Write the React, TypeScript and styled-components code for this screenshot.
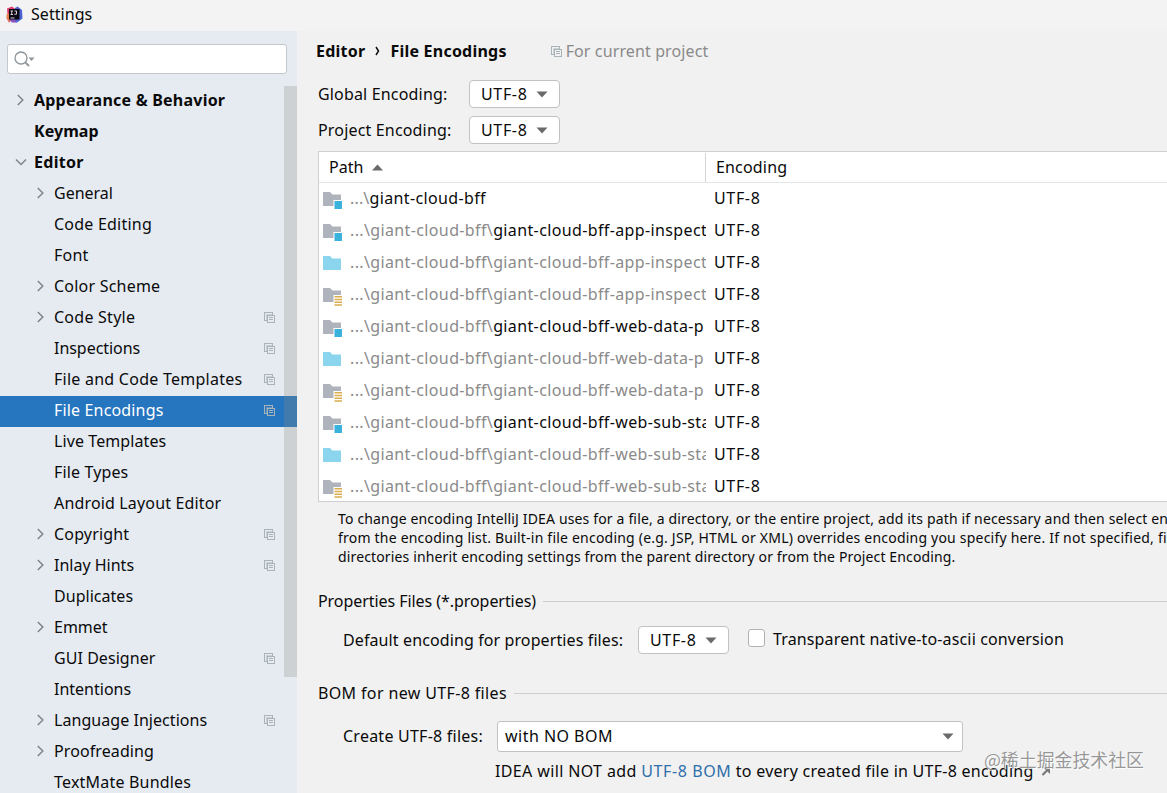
import React from 'react';
import styled, { createGlobalStyle } from 'styled-components';

const GlobalStyle = createGlobalStyle`
  * { box-sizing: border-box; }
  body {
    margin: 0;
    overflow: hidden;
    background: #f1f1f1;
    color: #0a0a0a;
    font-family: 'Noto Sans', 'Noto Sans CJK SC', sans-serif;
    font-size: 16px;
  }
`;

const Window = styled.div`
  position: relative;
  display: flex;
  flex-direction: column;
  width: 1167px;
  height: 793px;
  overflow: hidden;
`;

const TitleBar = styled.header`
  display: flex;
  align-items: center;
  gap: 8px;
  flex: none;
  height: 31px;
  padding: 0 0 3px 6px;
  background: #f3f3f3;
`;

const Body = styled.div`
  display: flex;
  flex: 1;
  min-height: 0;
`;

const Text = styled.span<{ $track?: number; $bold?: boolean; $muted?: boolean }>`
  flex: none;
  white-space: pre;
  letter-spacing: ${(p) => p.$track ?? 0}px;
  font-weight: ${(p) => (p.$bold ? 700 : 400)};
  ${(p) => p.$muted && 'color: #8a8a8a;'}
`;

const Sidebar = styled.aside`
  position: relative;
  flex: none;
  width: 297px;
  padding-top: 13px;
  overflow: hidden;
  background: #e6ebf2;
`;

const SearchField = styled.div`
  display: flex;
  align-items: center;
  width: 280px;
  height: 30px;
  margin: 0 0 12px 7px;
  padding-left: 6px;
  border: 1px solid #c3c8cb;
  border-radius: 3px;
  background: #fff;
`;

const TreeRow = styled.div<{ $level: number; $selected?: boolean }>`
  display: flex;
  align-items: center;
  height: 31px;
  padding: 0 22px 4px ${(p) => (p.$level ? 34 : 14)}px;
  background: ${(p) => (p.$selected ? '#2675bf' : 'transparent')};
  color: ${(p) => (p.$selected ? '#fff' : '#0a0a0a')};
`;

const Twisty = styled.span`
  display: flex;
  align-items: center;
  flex: none;
  width: 20px;
  height: 100%;
`;

const RowEnd = styled.span`
  display: flex;
  margin: 2px 0 0 auto;
`;

const Scrollbar = styled.div`
  position: absolute;
  top: 55px;
  right: 0;
  width: 13px;
  height: 591px;
  background: rgba(140, 140, 130, 0.27);
`;

const Main = styled.main`
  flex: 1;
  min-width: 0;
  padding-left: 21px;
`;

const Heading = styled.div`
  display: flex;
  align-items: center;
  height: 41px;
  margin-left: -2px;
  padding-bottom: 1px;
`;

const Crumb = styled.span`
  display: flex;
  align-items: center;
  justify-content: center;
  width: 25px;
`;

const ProjectHint = styled.span`
  display: flex;
  align-items: center;
  gap: 4px;
  margin-left: 44px;
`;

const Field = styled.div`
  display: flex;
  align-items: center;
  height: 28px;
  margin-top: 8px;
`;

const FieldLabel = styled.span`
  width: 151px;
`;

const Combo = styled.div<{ $wide?: boolean }>`
  display: flex;
  align-items: center;
  justify-content: space-between;
  flex: none;
  width: ${(p) => (p.$wide ? 466 : 91)}px;
  height: ${(p) => (p.$wide ? 31 : 28)}px;
  padding: ${(p) => (p.$wide ? '0 8px 0 7px' : '0 11px')};
  border: 1px solid #c2c2c2;
  border-radius: ${(p) => (p.$wide ? 3 : 4)}px;
  background: #fff;
`;

const Table = styled.div`
  height: 351px;
  margin-top: 7px;
  border: 1px solid #cfcfcf;
  border-right: 0;
  overflow: hidden;
  background: #fff;
`;

const TableHead = styled.div`
  display: flex;
  align-items: center;
  height: 31px;
  border-bottom: 1px solid #e4e4e4;
`;

const HeadCell = styled.div<{ $first?: boolean }>`
  display: flex;
  align-items: center;
  gap: 9px;
  flex: ${(p) => (p.$first ? '0 0 387px' : '1')};
  height: 29px;
  padding-left: 10px;
  ${(p) => p.$first && 'border-right: 1px solid #d4d4d4;'}
`;

const TableRow = styled.div`
  display: flex;
  align-items: center;
  height: 32px;
  padding-bottom: 2px;
`;

const PathCell = styled.div`
  display: flex;
  align-items: center;
  flex: none;
  width: 387px;
  padding-left: 4px;
  overflow: hidden;
`;

const FolderBox = styled.span`
  display: flex;
  flex: none;
  width: 27px;
  padding-top: 4px;
`;

const EncodingCell = styled.div`
  padding-left: 8px;
`;

const Help = styled.div`
  display: flex;
  flex-direction: column;
  height: 57px;
  margin: 7px 0 0 20px;
  font-size: 14px;
  line-height: 19px;
`;

const SectionTitle = styled.div<{ $gap: number }>`
  display: flex;
  align-items: center;
  gap: 7px;
  height: 24px;
  margin-top: ${(p) => p.$gap}px;
  &::after {
    content: '';
    flex: 1;
    height: 1px;
    background: #cdcdcd;
  }
`;

const OptionRow = styled.div<{ $top: number }>`
  display: flex;
  align-items: center;
  margin: ${(p) => p.$top}px 0 0 25px;
`;

const OptionLabel = styled.span<{ $width: number; $lift?: number }>`
  width: ${(p) => p.$width}px;
  margin-bottom: ${(p) => p.$lift ?? 0}px;
`;

const ComboValue = styled.span`
  margin-bottom: 2px;
`;

const Checkbox = styled.span`
  width: 17px;
  height: 18px;
  margin: 0 8px 4px 19px;
  border: 1px solid #b3b3b3;
  border-radius: 3px;
  background: #fff;
`;

const CheckText = styled.span`
  margin-bottom: 2px;
`;

const Note = styled.div`
  display: flex;
  align-items: center;
  height: 24px;
  margin: 7px 0 0 177px;
`;

const Link = styled(Text)`
  color: #2f6fab;
`;

const LinkArrow = styled.span`
  display: flex;
  margin: 0 0 1px 7px;
`;

const Watermark = styled.div`
  position: absolute;
  right: 23px;
  top: 746px;
  font-family: 'Noto Sans CJK SC', sans-serif;
  font-size: 17.9px;
  line-height: 26px;
  white-space: nowrap;
  color: rgba(120, 120, 120, 0.75);
  text-shadow: 1px 1px 1px rgba(255, 255, 255, 0.9);
`;

const AppLogo = () => (
  <svg width="17" height="17" viewBox="0 0 17 17">
    <path d="M1 2.500 6 .5l4 3L8 12l-5 4.500L.5 12l1-3z" fill="#e0406f" />
    <path d="M.5 8.500 4 7v7l-1 2.500L.8 12z" fill="#e8804a" />
    <path d="M9 2 11.500.5l4.500 3.500.5 8.500-5.500 4-6-1z" fill="#4a63d0" />
    <path d="M3 13.500 8 13l3 3.500H6z" fill="#8a52c0" />
    <rect x="3" y="3" width="10.500" height="10.500" fill="#0b0710" />
    <path d="M4.500 5h2.500M5.750 5v3.500M4.500 8.500h2.500M8.500 5h2v3.200H8.300" fill="none" stroke="#d4d0d8" />
    <path d="M4.500 12h4" stroke="#d4d0d8" />
  </svg>
);

const SearchIcon = () => (
  <svg width="22" height="18" viewBox="0 0 22 18">
    <circle cx="7" cy="8" r="6" fill="none" stroke="#8d9499" strokeWidth="1.300" />
    <path d="m11.300 12.300 3.700 3.700" stroke="#8d9499" strokeWidth="1.800" />
    <path d="M14.500 7.500h6l-3 3.500z" fill="#8d9499" />
  </svg>
);

const Chevron = ({ open }: { open?: boolean }) => (
  <svg width="13" height="12" viewBox="0 0 13 12">
    <path
      d={open ? 'M2 3.500 7 8.500 12 3.500' : 'm3.800 1 5 5-5 5'}
      fill="none"
      stroke="#7f848a"
      strokeWidth="1.500"
    />
  </svg>
);

const ProjectIcon = () => (
  <svg width="11" height="11" viewBox="0 0 11 11" fill="none" stroke="#aab3b8" shapeRendering="crispEdges">
    <path d="M2.500 8.500H.5v-8h8v2" />
    <path d="M2.500 8.500v-6h6" strokeOpacity=".5" />
    <rect x="3.500" y="3.500" width="7" height="7" />
    <path d="M5 5.500h4M5 7.500h4" />
  </svg>
);

const DownArrow = () => (
  <svg width="12" height="7" viewBox="0 0 12 7">
    <path d="M.5.5h11L6 6.500z" fill="#6a6a6a" />
  </svg>
);

const SortArrow = () => (
  <svg width="11" height="7" viewBox="0 0 11 7">
    <path d="M0 6.500h11L5.500.5z" fill="#6a6a6a" />
  </svg>
);

type FolderKind = 'module' | 'source' | 'resource';

const Folder = ({ kind }: { kind: FolderKind }) => (
  <svg width="20" height="19" viewBox="0 0 20 19">
    <path d="M0 1h7l2.500 2.500H18v11.500H0z" fill={kind === 'source' ? '#8bd5ef' : '#afb4bc'} />
    {kind === 'module' && (
      <>
        <rect x="10.500" y="9" width="9.500" height="10" fill="#fff" />
        <rect x="11.500" y="10" width="7.500" height="8" fill="#3bb2dc" />
      </>
    )}
    {kind === 'resource' && (
      <>
        <rect x="10.500" y="8" width="9.500" height="11" fill="#fff" />
        <path d="M11.500 9.750H19M11.500 12.500H19M11.500 15.250H19M11.500 18H19" stroke="#d9ad4e" strokeWidth="1.600" />
      </>
    )}
  </svg>
);

interface TreeItem {
  label: string;
  track: number;
  level?: number;
  arrow?: 'open' | 'closed';
  project?: boolean;
  selected?: boolean;
}

const tree: TreeItem[] = [
  { label: 'Appearance & Behavior', track: 0.22, level: 0, arrow: 'closed' },
  { label: 'Keymap', track: 0.05, level: 0 },
  { label: 'Editor', track: 0.3, level: 0, arrow: 'open' },
  { label: 'General', track: 0, arrow: 'closed' },
  { label: 'Code Editing', track: 0.22 },
  { label: 'Font', track: 0.25 },
  { label: 'Color Scheme', track: 0.22, arrow: 'closed' },
  { label: 'Code Style', track: 0.25, arrow: 'closed', project: true },
  { label: 'Inspections', track: -0.04, project: true },
  { label: 'File and Code Templates', track: 0.25, project: true },
  { label: 'File Encodings', track: 0.16, project: true, selected: true },
  { label: 'Live Templates', track: 0.09 },
  { label: 'File Types', track: 0.14 },
  { label: 'Android Layout Editor', track: 0.16 },
  { label: 'Copyright', track: 0.17, arrow: 'closed', project: true },
  { label: 'Inlay Hints', track: 0, arrow: 'closed', project: true },
  { label: 'Duplicates', track: 0.03 },
  { label: 'Emmet', track: 0, arrow: 'closed' },
  { label: 'GUI Designer', track: 0.05, project: true },
  { label: 'Intentions', track: 0 },
  { label: 'Language Injections', track: 0.05, arrow: 'closed', project: true },
  { label: 'Proofreading', track: 0.1, arrow: 'closed' },
  { label: 'TextMate Bundles', track: 0.2 },
];

interface PathItem {
  kind: FolderKind;
  parent: string;
  name: string;
}

const kinds: FolderKind[] = ['module', 'source', 'resource'];
const modules = ['giant-cloud-bff-app-inspect', 'giant-cloud-bff-web-data-p', 'giant-cloud-bff-web-sub-sta'];

const paths: PathItem[] = [
  { kind: 'module', parent: '...\\', name: 'giant-cloud-bff' },
  ...modules.flatMap((name) => kinds.map((kind) => ({ kind, parent: '...\\giant-cloud-bff\\', name }))),
];

const EncodingCombo = () => (
  <Combo>
    <Text $track={0.65}>UTF-8</Text>
    <DownArrow />
  </Combo>
);

export default function App() {
  return (
    <Window>
      <GlobalStyle />
      <TitleBar>
        <AppLogo />
        <Text $track={0.05}>Settings</Text>
      </TitleBar>
      <Body>
        <Sidebar>
          <SearchField>
            <SearchIcon />
          </SearchField>
          {tree.map((item) => (
            <TreeRow key={item.label} $level={item.level ?? 1} $selected={item.selected}>
              <Twisty>{item.arrow && <Chevron open={item.arrow === 'open'} />}</Twisty>
              <Text $track={item.track} $bold={item.level === 0}>
                {item.label}
              </Text>
              {item.project && (
                <RowEnd>
                  <ProjectIcon />
                </RowEnd>
              )}
            </TreeRow>
          ))}
          <Scrollbar />
        </Sidebar>
        <Main>
          <Heading>
            <Text $bold $track={0.25}>Editor</Text>
            <Crumb>
              <svg width="5" height="10" viewBox="0 0 5 10">
                <path d="m1 1 2.500 4L1 9" fill="none" stroke="#111" strokeWidth="1.500" />
              </svg>
            </Crumb>
            <Text $bold $track={0.22}>File Encodings</Text>
            <ProjectHint>
              <ProjectIcon />
              <Text $muted $track={0.12}>For current project</Text>
            </ProjectHint>
          </Heading>
          <Field>
            <FieldLabel>
              <Text $track={0.17}>Global Encoding:</Text>
            </FieldLabel>
            <EncodingCombo />
          </Field>
          <Field>
            <FieldLabel>
              <Text $track={0.17}>Project Encoding:</Text>
            </FieldLabel>
            <EncodingCombo />
          </Field>
          <Table>
            <TableHead>
              <HeadCell $first>
                <Text>Path</Text>
                <SortArrow />
              </HeadCell>
              <HeadCell>
                <Text $track={0.17}>Encoding</Text>
              </HeadCell>
            </TableHead>
            {paths.map((item) => (
              <TableRow key={item.kind + item.name}>
                <PathCell>
                  <FolderBox>
                    <Folder kind={item.kind} />
                  </FolderBox>
                  <Text $muted $track={item.parent.length > 4 ? 0.37 : 0.15}>{item.parent}</Text>
                  <Text $muted={item.kind !== 'module'} $track={0.37}>{item.name}</Text>
                </PathCell>
                <EncodingCell>
                  <Text $track={0.65}>UTF-8</Text>
                </EncodingCell>
              </TableRow>
            ))}
          </Table>
          <Help>
            <Text $track={0.155}>
              To change encoding IntelliJ IDEA uses for a file, a directory, or the entire project, add its path if necessary and then select encoding
            </Text>
            <Text $track={0.21}>
              from the encoding list. Built-in file encoding (e.g. JSP, HTML or XML) overrides encoding you specify here. If not specified, files and
            </Text>
            <Text $track={0.14}>
              directories inherit encoding settings from the parent directory or from the Project Encoding.
            </Text>
          </Help>
          <SectionTitle $gap={23}>
            <Text $track={-0.06}>Properties Files (*.properties)</Text>
          </SectionTitle>
          <OptionRow $top={13}>
            <OptionLabel $width={295}>
              <Text $track={0.11}>Default encoding for properties files:</Text>
            </OptionLabel>
            <EncodingCombo />
            <Checkbox />
            <CheckText>
              <Text $track={0.14}>Transparent native-to-ascii conversion</Text>
            </CheckText>
          </OptionRow>
          <SectionTitle $gap={27}>
            <Text $track={0.36}>BOM for new UTF-8 files</Text>
          </SectionTitle>
          <OptionRow $top={16}>
            <OptionLabel $width={154} $lift={2}>
              <Text $track={0.24}>Create UTF-8 files:</Text>
            </OptionLabel>
            <Combo $wide>
              <ComboValue>
                <Text $track={0.47}>with NO BOM</Text>
              </ComboValue>
              <DownArrow />
            </Combo>
          </OptionRow>
          <Note>
            <Text $track={0.37}>IDEA will NOT add </Text>
            <Link $track={0.6}>UTF-8 BOM</Link>
            <Text $track={0.26}> to every created file in UTF-8 encoding</Text>
            <LinkArrow>
              <svg width="10" height="10" viewBox="0 0 10 10">
                <path d="M1.500 9 6 4.500" stroke="#777" strokeWidth="2.200" />
                <path d="M2.500 1.500H9V8z" fill="#777" />
              </svg>
            </LinkArrow>
          </Note>
        </Main>
      </Body>
      <Watermark>@稀土掘金技术社区</Watermark>
    </Window>
  );
}
